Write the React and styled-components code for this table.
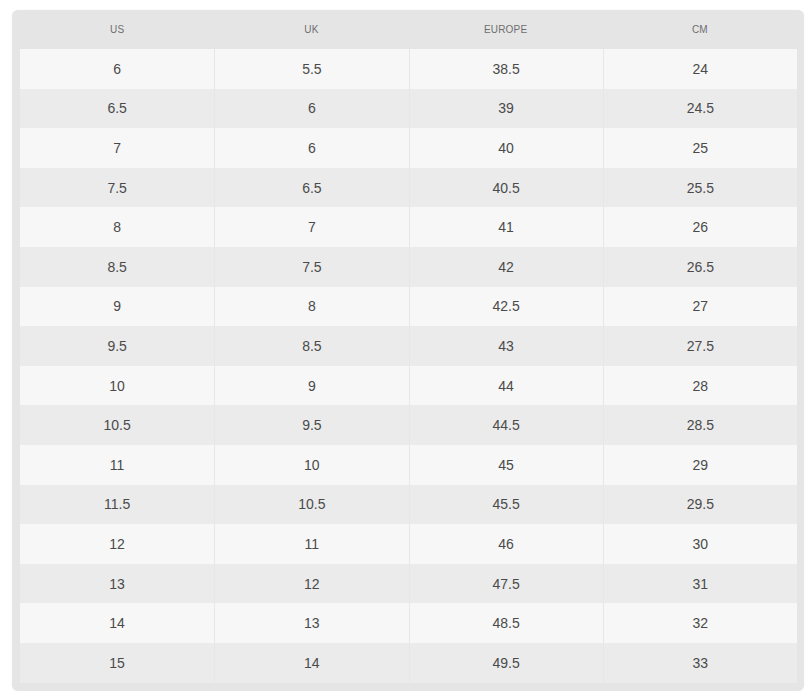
import React from "react";
import styled, {createGlobalStyle} from "styled-components";

const GlobalStyle = createGlobalStyle`
  body {
    margin: 0;
    background: #ffffff;
    font-family: "Liberation Sans", Arial, sans-serif;
  }
`;

const Page = styled.div`
  padding: 10px 6px 9px 12px;
`;

const Panel = styled.div`
  background: #e5e5e5;
  border-radius: 6px;
  padding: 0 7px 8px 8px;
  box-shadow: 0 0 2px rgba(0, 0, 0, 0.06);
`;

const Table = styled.div`
  display: grid;
  grid-template-columns: repeat(4, 1fr);
`;

const HeadCell = styled.div`
  height: 39px;
  display: flex;
  align-items: center;
  justify-content: center;
  font-size: 10px;
  color: #6e6e6e;
  letter-spacing: 0.2px;
`;

const Cell = styled.div`
  height: 39.6px;
  display: flex;
  align-items: center;
  justify-content: center;
  font-size: 14px;
  color: #4a4a4a;
  background: ${({striped}) => (striped ? "#ebebeb" : "#f7f7f7")};
  border-left: ${({first}) => (first ? "none" : "1px solid #e7e7e7")};
  box-sizing: border-box;
`;

const headers = ["US", "UK", "EUROPE", "CM"];

const sizes = [
    ["6", "5.5", "38.5", "24"],
    ["6.5", "6", "39", "24.5"],
    ["7", "6", "40", "25"],
    ["7.5", "6.5", "40.5", "25.5"],
    ["8", "7", "41", "26"],
    ["8.5", "7.5", "42", "26.5"],
    ["9", "8", "42.5", "27"],
    ["9.5", "8.5", "43", "27.5"],
    ["10", "9", "44", "28"],
    ["10.5", "9.5", "44.5", "28.5"],
    ["11", "10", "45", "29"],
    ["11.5", "10.5", "45.5", "29.5"],
    ["12", "11", "46", "30"],
    ["13", "12", "47.5", "31"],
    ["14", "13", "48.5", "32"],
    ["15", "14", "49.5", "33"],
];

const App = () => {
    return (
        <>
            <GlobalStyle/>
            <Page>
                <Panel>
                    <Table>
                        {headers.map((h) => <HeadCell key={h}>{h}</HeadCell>)}
                        {sizes.map((row, i) =>
                            row.map((value, j) => (
                                <Cell key={`${i}-${j}`} striped={i % 2 === 1} first={j === 0}>
                                    {value}
                                </Cell>
                            ))
                        )}
                    </Table>
                </Panel>
            </Page>
        </>
    )
}

export default App;
